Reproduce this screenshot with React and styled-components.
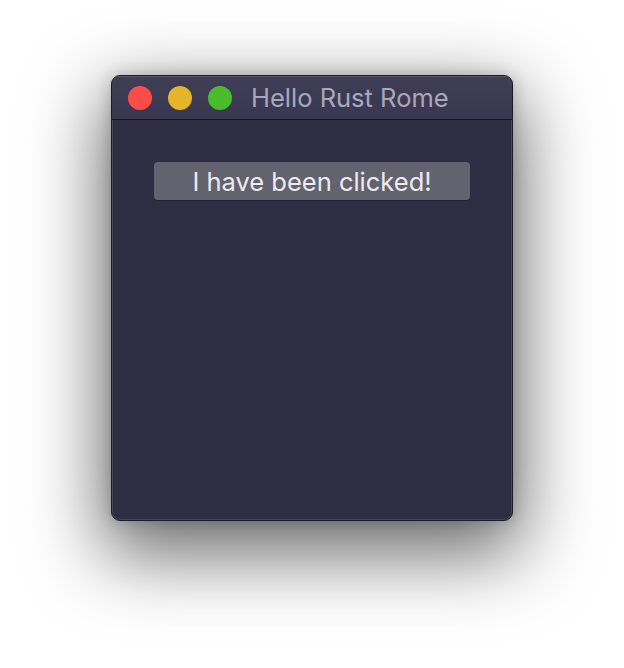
import React from "react";
import styled, { createGlobalStyle } from "styled-components";

const Global = createGlobalStyle`
  html, body { margin: 0; padding: 0; background: #ffffff; }
  body { font-family: Inter, "Noto Sans", "Liberation Sans", sans-serif; }
`;

const Page = styled.div`
  width: 624px;
  height: 668px;
  padding: 75px 0 0 111px;
  box-sizing: border-box;
  overflow: hidden;
`;

const Window = styled.div`
  width: 402px;
  height: 446px;
  box-sizing: border-box;
  border-radius: 9px;
  background: #2f2d43;
  border: 1px solid #1b1a26;
  box-shadow: inset 0 0 0 1px rgba(120, 118, 140, 0.35),
    0 26px 75px 8px rgba(0, 0, 0, 0.58), 0 0 16px rgba(0, 0, 0, 0.2);
  display: flex;
  flex-direction: column;
  overflow: hidden;
`;

const TitleBar = styled.div`
  height: 43px;
  flex: none;
  display: flex;
  align-items: center;
  padding-left: 16px;
  gap: 16px;
  background: linear-gradient(#403e55, #393750);
  border-bottom: 1px solid #15141d;
  box-shadow: inset 0 1px 0 rgba(140, 138, 160, 0.35);
`;

const Light = styled.span`
  width: 24px;
  height: 24px;
  border-radius: 50%;
  background: ${(p) => p.$color};
  flex: none;
`;

const Title = styled.span`
  margin-left: 3px;
  font-size: 25.5px;
  color: #a9a8ba;
`;

const Content = styled.div`
  flex: 1;
  display: flex;
  flex-direction: column;
  align-items: flex-start;
  padding: 42px 0 0 42px;
`;

const Button = styled.button`
  width: 316px;
  height: 38px;
  border: none;
  border-radius: 4px;
  background: #63626f;
  color: #ececef;
  font-family: Inter, "Noto Sans", "Liberation Sans", sans-serif;
  font-size: 25.5px;
  padding: 0;
  box-shadow: 0 1px 1px rgba(0, 0, 0, 0.25);
`;

export default function App() {
  return (
    <>
      <Global />
      <Page>
        <Window>
          <TitleBar>
            <Light $color="#fe4d48" />
            <Light $color="#e4b52a" />
            <Light $color="#49bb2d" />
            <Title>Hello Rust Rome</Title>
          </TitleBar>
          <Content>
            <Button>I have been clicked!</Button>
          </Content>
        </Window>
      </Page>
    </>
  );
}
